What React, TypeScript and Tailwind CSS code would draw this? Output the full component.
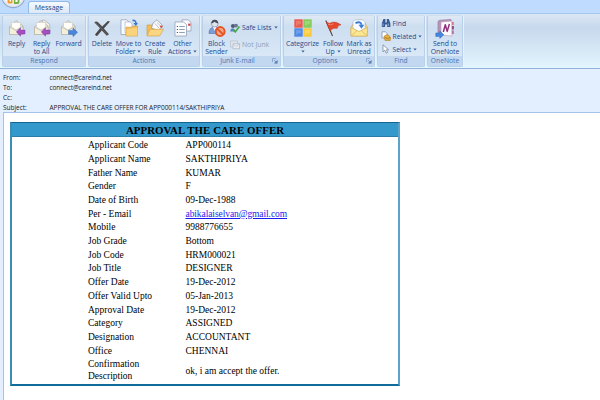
import type { ReactNode } from "react";

const UI = "font-['Open_Sans','Noto_Sans',sans-serif]";

function Env() {
  return (
    <>
      <path d="M1.5 8 L8 1.5 L15 7 V15.5 H1.5 Z" fill="#e9e6da" stroke="#a7a9ae" strokeWidth=".7" />
      <path d="M3.5 8 V3.5 H12.5 V8 L8 11 Z" fill="#fffef6" stroke="#c2c3c4" strokeWidth=".5" />
      <path d="M1.5 8 L8 11.5 L15 7.5 V15.5 H1.5 Z" fill="#f5efd9" stroke="#b0aea6" strokeWidth=".6" />
    </>
  );
}

function Icon({ children, w = 18, h = 18 }: { children: ReactNode; w?: number; h?: number }) {
  return (
    <svg width={w} height={h} viewBox={`0 0 ${w} ${h}`} className="block shrink-0">
      {children}
    </svg>
  );
}

const LeftArrow = () => (
  <path d="M8.3 13 L12.5 8.8 V11.1 H17 V14.9 H12.5 V17.2 Z" fill="#a44fc4" stroke="#8038a6" strokeWidth=".5" />
);

const ReplyIcon = () => (
  <Icon>
    <Env />
    <LeftArrow />
  </Icon>
);
const ReplyAllIcon = () => (
  <Icon>
    <path d="M6 3 L11 .8 L16.8 5.5 V13 H6 Z" fill="#f1eee2" stroke="#a7a9ae" strokeWidth=".7" />
    <Env />
    <LeftArrow />
  </Icon>
);
const ForwardIcon = () => (
  <Icon>
    <Env />
    <path d="M17.5 13.3 L13 9 V11.4 H8.5 V15.2 H13 V17.6 Z" fill="#4a86dc" stroke="#2c62b4" strokeWidth=".5" />
  </Icon>
);
const DeleteIcon = () => (
  <Icon>
    <path d="M1.2 3.2 Q4 1.5 6 4.3 L9.2 7.6 L14.8 1.9 L17 2.6 L10.9 9.4 L16 15.2 L13.8 16.8 L8.8 11.4 L4.4 16.8 Q2.6 17.2 2 15.6 L7 9.3 Z" fill="#4a4a4d" />
    <path d="M2.4 3.4 L14.5 15.8" stroke="#77777a" strokeWidth=".6" />
  </Icon>
);
const MoveIcon = () => (
  <Icon>
    <path d="M1 .8 H6.5 L9 3 V15.5 H1 Z" fill="#f9fbfe" stroke="#8b9ab5" strokeWidth=".7" />
    <path d="M5 3 H10 L12 5 V14 H5 Z" fill="#fff" stroke="#9aa8bf" strokeWidth=".6" />
    <path d="M6 8.2 V17 H17.6 V7.2 H12.5 L11.5 8.2 Z" fill="#f3bd55" stroke="#cf9734" strokeWidth=".6" />
    <path d="M6.5 10 L17.3 8.8 V16.7 H6.5 Z" fill="#fad37c" />
    <path d="M12.5 1.4 Q16 1 16 4.5" fill="none" stroke="#3d78cf" strokeWidth="1.6" />
    <path d="M13.4 4 H18 L15.8 7 Z" fill="#3d78cf" />
  </Icon>
);
const RuleIcon = () => (
  <Icon>
    <path d="M1 6 H6 L7.5 8 H13 V16.5 H1 Z" fill="#f2bd55" stroke="#cf9837" strokeWidth=".6" />
    <path d="M7 4 L11 .8 L17 7 L12.5 12 L5.5 9 Z" fill="#fafafa" stroke="#8b94a5" strokeWidth=".7" />
    <path d="M9 4.5 L13.5 9.5 M11 3.3 L14.5 7" stroke="#a5b3c8" strokeWidth=".8" />
    <circle cx="15.2" cy="7.6" r="1.2" fill="#e0423a" />
    <path d="M4 10.3 H17.5 L13.5 17 H1 Z" fill="#fbd582" stroke="#d4a040" strokeWidth=".6" />
  </Icon>
);
const OtherIcon = () => (
  <Icon>
    <path d="M8 .8 H14 L17 3.5 V12 H8 Z" fill="#f8fafd" stroke="#8c98ae" strokeWidth=".7" />
    <rect x="14.2" y="4.6" width="2.2" height="2.2" fill="#dc3c3c" />
    <path d="M1 3 H9.5 L12.5 5.5 V17 H1 Z" fill="#fcfdff" stroke="#8c98ae" strokeWidth=".7" />
    <path d="M5.2 7.5 H10.8 M5.2 10.5 H10.8 M5.2 13.5 H10.8" stroke="#8595ad" strokeWidth=".9" />
    <path d="M2.8 7.5 H4 M2.8 10.5 H4 M2.8 13.5 H4" stroke="#4b5a73" strokeWidth="1.2" />
  </Icon>
);
const BlockIcon = () => (
  <Icon>
    <path d="M1 14.5 Q1 8 6.5 8 Q12 8 12 14.5 Z" fill="#7c9cd4" stroke="#5571a8" strokeWidth=".6" />
    <path d="M5 8 H8.5 L6.8 12 Z" fill="#fff" />
    <circle cx="6.7" cy="4.6" r="3.4" fill="#dfe3ec" stroke="#77809a" strokeWidth=".6" />
    <path d="M3.2 4.6 Q3.4 .8 6.8 .8 Q10.2 .8 10.2 4.6 Q7.5 4 6.5 2.8 Q5 4.3 3.2 4.6" fill="#4a4e60" />
    <circle cx="12.2" cy="12.5" r="4.4" fill="#f8a888" stroke="#e2562a" strokeWidth="2" />
    <path d="M9 9.5 L15.4 15.4" stroke="#e2562a" strokeWidth="2" />
  </Icon>
);
const CategorizeIcon = () => (
  <Icon>
    <rect x=".3" y=".3" width="8.4" height="8.4" fill="#ea5a50" />
    <rect x="9.3" y=".3" width="8.4" height="8.4" fill="#85cc5c" />
    <rect x=".3" y="9.3" width="8.4" height="8.4" fill="#5089e4" />
    <rect x="9.3" y="9.3" width="8.4" height="8.4" fill="#fac93e" />
    <path d="M2 2 H7 V5 Q4 5 2 7 Z" fill="#ef776c" />
    <path d="M11 2 H16 V5 Q13 5 11 7 Z" fill="#9ad878" />
    <path d="M2 11 H7 V14 Q4 14 2 16 Z" fill="#6a9eec" />
    <path d="M11 11 H16 V14 Q13 14 11 16 Z" fill="#fcd765" />
  </Icon>
);
const FlagIcon = () => (
  <Icon>
    <path d="M1.8 1.5 L8.5 17" stroke="#5c4a48" strokeWidth="1.2" />
    <path d="M2.3 3 Q5.5 5.5 8.5 3.2 Q12 2.2 17 5.8 Q13.5 6 13.2 9.3 Q9 8.3 6 11.8 Z" fill="#e4492c" stroke="#b8321c" strokeWidth=".5" />
    <path d="M4 5.2 Q7 6.6 9.5 4.8" stroke="#f5886e" strokeWidth=".9" fill="none" />
  </Icon>
);
const UnreadIcon = () => (
  <Icon>
    <path d="M1 8.2 L4 3.5 L8 1 H12 L15 4 L17.3 8.2 V17 H1 Z" fill="#f5d87c" stroke="#cfa648" strokeWidth=".6" />
    <path d="M3 9.5 V2.5 L5 .8 H13 L15 2.8 V9.5 L9 13 Z" fill="#f8fbff" stroke="#a7b2c6" strokeWidth=".6" />
    <path d="M1 8.6 L9 12.5 L17.3 8.6 V17 H1 Z" fill="#fce795" stroke="#d3ad4d" strokeWidth=".6" />
    <path d="M1.5 16.5 L7 11.8 M17 16.5 L11.3 11.8" stroke="#d3ad4d" strokeWidth=".6" />
    <path d="M5.5 4.2 Q10.5 1.6 11.6 5.8" stroke="#3b7bd6" strokeWidth="1.9" fill="none" />
    <path d="M8.6 5.8 H14.2 L11.5 9.8 Z" fill="#3b7bd6" />
  </Icon>
);
const OneNoteIcon = () => (
  <Icon w={20} h={20}>
    <path d="M3 3 Q3 1.5 5 1.2 L16 .5 V14.5 L3 16 Z" fill="#b797b9" stroke="#95709a" strokeWidth=".6" />
    <path d="M16.5 3 H18.8 V6 H16.5 Z" fill="#e4747c" />
    <path d="M16.5 7 H18.8 V10.5 H16.5 Z" fill="#8a3a6f" />
    <path d="M16.5 11.5 H18.8 V15 H16.5 Z" fill="#b66da8" />
    <path d="M6 3 L16.8 2 V17 L6 16.2 Z" fill="#fdfafd" stroke="#b798b8" strokeWidth=".6" />
    <path d="M8.3 13 L10.3 5.8 L12.2 12.4 L14.4 5" fill="none" stroke="#92307e" strokeWidth="1.5" strokeLinejoin="round" />
    <path d="M8.8 15.8 L4.8 12 V14 H.8 V17.5 H4.8 V19.4 Z" fill="#4787dc" stroke="#2f68ba" strokeWidth=".5" />
  </Icon>
);

const SafeIcon = () => (
  <Icon w={10} h={10}>
    <circle cx="3" cy="3" r="2.1" fill="#4c5a79" />
    <path d="M.3 8.5 Q.3 5.2 3.3 5.2 L5.5 8.5 Z" fill="#5a7fc0" />
    <circle cx="6" cy="2.6" r="1.9" fill="#697691" />
    <path d="M3.3 6.3 L5.2 8.9 L9.4 3.5" fill="none" stroke="#43a447" strokeWidth="1.6" />
  </Icon>
);
const NotJunkIcon = () => (
  <Icon w={10} h={10}>
    <rect x=".6" y="1" width="7" height="6" fill="#dfe5ec" stroke="#b6c0cd" strokeWidth=".7" />
    <rect x="3" y="3.8" width="6.4" height="5" fill="#e9edf2" stroke="#aab6c5" strokeWidth=".7" />
    <path d="M3 3.8 L6.2 6.6 L9.4 3.8" fill="none" stroke="#aab6c5" strokeWidth=".6" />
  </Icon>
);
const FindIcon = () => (
  <Icon w={10} h={10}>
    <path d="M2.4 1 H4.4 V4.5 H5.8 V1 H7.8 L9.4 5.5 V9 H6.1 V6.5 H4.1 V9 H.8 V5.5 Z" fill="#395b94" />
    <path d="M2 5.5 V8 M7.3 5.5 V8" stroke="#9bb5de" strokeWidth=".9" />
  </Icon>
);
const RelatedIcon = () => (
  <Icon w={10} h={10}>
    <path d="M1 .8 H4.5 L6 2.3 V7 H1 Z" fill="#fff" stroke="#6e84a8" strokeWidth=".7" />
    <path d="M3 5.2 L6.5 3.4 L9.4 6 V9.4 H4 Z" fill="#e8b03e" stroke="#a97821" strokeWidth=".6" />
    <path d="M4 6.5 L6.8 7.6 L9 6.3" stroke="#8b621c" strokeWidth=".6" fill="none" />
  </Icon>
);
const SelectIcon = () => (
  <Icon w={10} h={10}>
    <path d="M2 .8 V7.8 L3.9 6.3 L5.2 9.2 L6.6 8.5 L5.4 5.8 H7.6 Z" fill="#fdfdfd" stroke="#6b7c99" strokeWidth=".7" />
  </Icon>
);

const Caret = ({ className = "" }: { className?: string }) => (
  <svg width="4" height="3" viewBox="0 0 4 3" className={`inline-block align-middle ${className}`}>
    <path d="M.3 .4 H3.7 L2 2.4 Z" fill="#3a5f9c" />
  </svg>
);

function Group({ title, width, launcher, children }: { title: string; width: string; launcher?: boolean; children: ReactNode }) {
  return (
    <section className={`flex h-[52px] shrink-0 flex-col overflow-hidden rounded-[2px] border border-[#b9d0ea] border-t-[#d0dff0] bg-linear-to-b from-[#dfe9f5] from-0% via-[#cddef0] via-22% to-[#deecf9] shadow-[1px_0_0_#e9f2fb] ${width}`}>
      <div className="flex h-[40px] pt-[2.5px]">{children}</div>
      <div className="flex h-[10px] items-center justify-center bg-[#c1d8f0] text-[6.7px] leading-[10px] tracking-[0.02px] text-[#4a77b4]">
        <span className="flex-1 text-center">{title}</span>
        {launcher && (
          <svg width="6" height="6" viewBox="0 0 6 6" className="mr-[2px]">
            <path d="M.5 4 V.5 H4" fill="none" stroke="#7f9cc5" strokeWidth=".8" />
            <path d="M2.2 2.2 L4 4 M5.2 2.5 V5.2 H2.5 Z" stroke="#5e80b3" strokeWidth=".7" fill="#5e80b3" />
          </svg>
        )}
      </div>
    </section>
  );
}

function Big({ icon, lines, width, caret, caretBelow }: { icon: ReactNode; lines: string[]; width: string; caret?: boolean; caretBelow?: boolean }) {
  return (
    <div className={`flex shrink-0 flex-col items-center whitespace-nowrap text-[6.9px] leading-[8px] tracking-[-0.08px] text-[#26498c] ${width}`}>
      <div className="flex h-[21px] items-start justify-center">{icon}</div>
      {lines.map((l, i) => (
        <div key={l} className="flex items-center">
          {l}
          {caret && i === lines.length - 1 && <Caret className="ml-[2px]" />}
        </div>
      ))}
      {caretBelow && <Caret className="mt-[2px]" />}
    </div>
  );
}

function Small({ icon, label, caret, muted }: { icon: ReactNode; label: string; caret?: boolean; muted?: boolean }) {
  return (
    <div className={`flex h-[13px] items-center whitespace-nowrap text-[6.8px] leading-[13px] ${muted ? "text-[#929eaf]" : "text-[#26498c]"}`}>
      {icon}
      <span className="ml-[2px]">{label}</span>
      {caret && <Caret className="ml-[2px]" />}
    </div>
  );
}

const headers = [
  ["From:", "connect@careind.net"],
  ["To:", "connect@careind.net"],
  ["Cc:", ""],
  ["Subject:", "APPROVAL THE CARE OFFER FOR APP000114/SAKTHIPRIYA"],
];

const rows = [
  ["Applicant Code", "APP000114"],
  ["Applicant Name", "SAKTHIPRIYA"],
  ["Father Name", "KUMAR"],
  ["Gender", "F"],
  ["Date of Birth", "09-Dec-1988"],
  ["Per - Email", "abikalaiselvan@gmail.com"],
  ["Mobile", "9988776655"],
  ["Job Grade", "Bottom"],
  ["Job Code", "HRM000021"],
  ["Job Title", "DESIGNER"],
  ["Offer Date", "19-Dec-2012"],
  ["Offer Valid Upto", "05-Jan-2013"],
  ["Approval Date", "19-Dec-2012"],
  ["Category", "ASSIGNED"],
  ["Designation", "ACCOUNTANT"],
  ["Office", "CHENNAI"],
];

export default function App() {
  return (
    <div className={`flex h-[400px] w-[600px] flex-col overflow-hidden bg-[#e3efff] ${UI}`}>
      <div className="flex h-[13px] shrink-0 bg-[#bfdbff]">
        <svg width="28" height="13" viewBox="0 0 28 13" className="block shrink-0">
          <circle cx="13.3" cy="-3.6" r="11.9" fill="#8fa8cb" />
          <circle cx="13.3" cy="-4.2" r="11.2" fill="#e3e8f0" />
          <circle cx="13.3" cy="-5" r="9.6" fill="#f8fafc" />
          <path d="M7.5 0 H12.5 V3.6 H9.5 Q7.5 3.6 7.5 2 Z" fill="#ef9a2c" />
          <path d="M13.8 0 H19.5 V2 Q19.5 4 17.4 4 H13.8 Z" fill="#72b043" />
          <path d="M9.5 0 H11 V1.6 H9.5 Z M15.4 0 H17.6 V2 H15.4 Z" fill="#fff" />
        </svg>
        <div className="mt-px flex h-[13px] w-[42px] items-center justify-center rounded-t-[3px] border border-b-0 border-[#93b9e6] bg-linear-to-b from-[#f4f9ff] to-[#dbe7f5] text-[7px] text-[#24488b]">
          Message
        </div>
      </div>

      <div className="flex h-[56px] shrink-0 gap-[2px] border-y border-t-[#a3c8f1] border-b-[#91b3da] bg-linear-to-b from-[#dbe6f3] from-0% via-[#c7d8ed] via-25% to-[#e3f5fd] pt-[1px] pl-[2px]">
        <Group title="Respond" width="w-[84px]">
          <Big icon={<ReplyIcon />} lines={["Reply"]} width="w-[27px]" />
          <Big icon={<ReplyAllIcon />} lines={["Reply", "to All"]} width="w-[23px]" />
          <Big icon={<ForwardIcon />} lines={["Forward"]} width="w-[31px]" />
        </Group>
        <Group title="Actions" width="w-[112px]">
          <Big icon={<DeleteIcon />} lines={["Delete"]} width="w-[26px]" />
          <Big icon={<MoveIcon />} lines={["Move to", "Folder"]} width="w-[27px]" caret />
          <Big icon={<RuleIcon />} lines={["Create", "Rule"]} width="w-[26px]" />
          <Big icon={<OtherIcon />} lines={["Other", "Actions"]} width="w-[29px]" caret />
        </Group>
        <Group title="Junk E-mail" width="w-[79px]" launcher>
          <Big icon={<BlockIcon />} lines={["Block", "Sender"]} width="w-[27px]" />
          <div className="flex flex-col gap-[4px] pt-[2.5px]">
            <Small icon={<SafeIcon />} label="Safe Lists" caret />
            <Small icon={<NotJunkIcon />} label="Not Junk" muted />
          </div>
        </Group>
        <Group title="Options" width="w-[92px]" launcher>
          <Big icon={<CategorizeIcon />} lines={["Categorize"]} width="w-[37px]" caretBelow />
          <Big icon={<FlagIcon />} lines={["Follow", "Up"]} width="w-[24px]" caret />
          <Big icon={<UnreadIcon />} lines={["Mark as", "Unread"]} width="w-[28px]" />
        </Group>
        <Group title="Find" width="w-[48px]">
          <div className="-mt-[2px] flex flex-col pl-[2.5px]">
            <Small icon={<FindIcon />} label="Find" />
            <Small icon={<RelatedIcon />} label="Related" caret />
            <Small icon={<SelectIcon />} label="Select" caret />
          </div>
        </Group>
        <Group title="OneNote" width="w-[36px]">
          <Big icon={<OneNoteIcon />} lines={["Send to", "OneNote"]} width="w-[34px]" />
        </Group>
      </div>

      <div className="flex h-[43px] shrink-0 flex-col pt-[4px] pl-[3px] text-[6.5px] leading-[10px] tracking-[-0.03px] text-[#1a1a1a]">
        {headers.map(([k, v]) => (
          <div key={k} className="flex h-[10px] whitespace-nowrap">
            <span className="w-[46.5px] shrink-0">{k}</span>
            <span className={v.includes("@") ? "tracking-[-0.1px]" : ""}>{v}</span>
          </div>
        ))}
      </div>

      <main className="ml-[3px] flex-1 border-t border-l border-[#a5c2ea] bg-white pt-[9px] pl-[6px] font-['Liberation_Serif',serif] text-black">
        <div className="flex h-[264px] w-[390px] flex-col border-t border-r-2 border-b-2 border-l-2 border-t-[#14648f] border-r-[#5ba3c8] border-b-[#0f6c9a] border-l-[#3c8db5]">
          <div className="h-[14px] shrink-0 border-b border-[#2b7ea8] bg-[#3399cc] text-center text-[10.8px] leading-[14px] font-bold tracking-[0.1px]">
            APPROVAL THE CARE OFFER
          </div>
          <div className="flex flex-col pt-[2.3px] text-[9.5px]">
            {rows.map(([k, v]) => (
              <div key={k} className="flex h-[13.7px] items-center pl-[76px] leading-[13.7px] whitespace-nowrap">
                <span className="w-[97.5px] shrink-0">{k}</span>
                {v.includes("@") ? <a className="tracking-[-0.08px] text-[#1a1aee] underline">{v}</a> : <span>{v}</span>}
              </div>
            ))}
            <div className="flex h-[25px] items-center pl-[76px]">
              <span className="w-[97.5px] shrink-0 pr-[30px] leading-[11.5px]">Confirmation Description</span>
              <span>ok, i am accept the offer.</span>
            </div>
          </div>
        </div>
      </main>
    </div>
  );
}
